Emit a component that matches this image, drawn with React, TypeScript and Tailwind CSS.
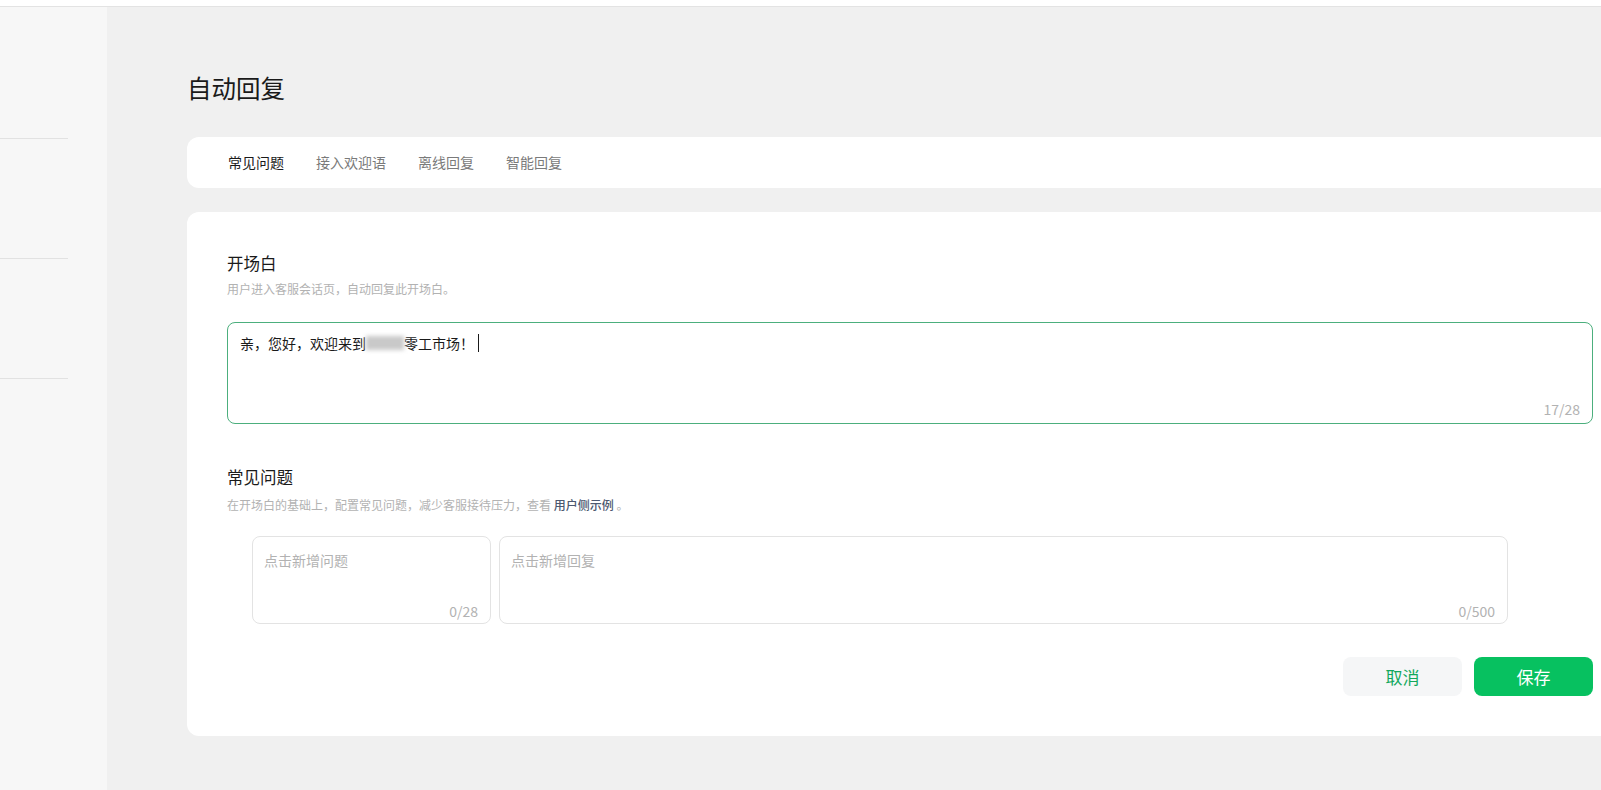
import React from 'react';

const font = { fontFamily: '"Noto Sans CJK SC", "Noto Sans", sans-serif' };

const tabs = ['常见问题', '接入欢迎语', '离线回复', '智能回复'];

const SideNav: React.FC = () => (
  <div className="w-[107px] shrink-0 bg-[#f7f7f7] flex flex-col">
    <div className="h-[132px] flex items-end">
      <div className="w-[68px] border-b border-[#e2e2e2]" />
    </div>
    <div className="h-[120px] flex items-end">
      <div className="w-[68px] border-b border-[#e2e2e2]" />
    </div>
    <div className="h-[120px] flex items-end">
      <div className="w-[68px] border-b border-[#e2e2e2]" />
    </div>
  </div>
);

const Counter: React.FC<{ text: string; bottom?: string }> = ({ text, bottom = 'bottom-[4px]' }) => (
  <span className={`absolute right-[12px] ${bottom} text-[14px] leading-[20px] text-[#b2b2b2]`}>{text}</span>
);

export default function App() {
  return (
    <div className="w-full h-[790px] overflow-hidden flex flex-col bg-[#f0f0f0]" style={font}>
      {/* top strip */}
      <div className="h-[7px] shrink-0 bg-white border-b border-[#e3e3e3]" />

      <div className="flex flex-1 min-h-0">
        <SideNav />

        <main className="flex-1 min-w-0 pl-[80px] pt-[65px]">
          <h1 className="text-[24.5px] leading-[32px] text-[#1a1a1a] font-normal">自动回复</h1>

          {/* tabs */}
          <div className="mt-[33px] mr-[-20px] h-[51px] bg-white rounded-[12px] px-[41px] flex items-center gap-[32px] text-[14px]">
            {tabs.map((t, i) => (
              <span key={t} className={i === 0 ? 'text-[#1a1a1a]' : 'text-[#7a7a7a]'}>
                {t}
              </span>
            ))}
          </div>

          {/* content card */}
          <div className="mt-[24px] mr-[-20px] bg-white rounded-[12px] pl-[40px] pr-[28px] pt-[39px] pb-[40px]">
            <h2 className="text-[16.5px] leading-[24px] text-[#1a1a1a] font-normal">开场白</h2>
            <p className="mt-[6px] text-[12px] leading-[16px] text-[#b2b2b2]">用户进入客服会话页，自动回复此开场白。</p>

            <div className="relative mt-[25px] h-[102px] rounded-[8px] border border-[#4caf7d] px-[12px] pt-[10px]">
              <div className="flex items-center text-[14px] leading-[20px] text-[#1a1a1a]">
                <span>亲，您好，欢迎来到</span>
                <span className="inline-block w-[38px] h-[14px] bg-[#c9c9c9] blur-[2px]" />
                <span>零工市场！</span>
                <span className="inline-block ml-[4px] w-px h-[18px] bg-[#1a1a1a]" />
              </div>
              <Counter text="17/28" />
            </div>

            <h2 className="mt-[41px] text-[16.5px] leading-[24px] text-[#1a1a1a] font-normal">常见问题</h2>
            <p className="mt-[8px] text-[12px] leading-[16px] text-[#b2b2b2]">
              在开场白的基础上，配置常见问题，减少客服接待压力，查看{' '}
              <span className="text-[#4c5870] font-medium">用户侧示例</span> 。
            </p>

            <div className="mt-[23px] ml-[25px] flex gap-[8px]">
              <div className="relative w-[239px] h-[88px] rounded-[8px] border border-[#e3e3e3] px-[11px] pt-[10px]">
                <span className="text-[14px] leading-[20px] text-[#b2b2b2]">点击新增问题</span>
                <Counter text="0/28" bottom="bottom-[2px]" />
              </div>
              <div className="relative w-[1009px] h-[88px] rounded-[8px] border border-[#e3e3e3] px-[11px] pt-[10px]">
                <span className="text-[14px] leading-[20px] text-[#b2b2b2]">点击新增回复</span>
                <Counter text="0/500" bottom="bottom-[2px]" />
              </div>
            </div>

            <div className="mt-[33px] flex justify-end gap-[12px]">
              <button className="w-[119px] h-[39px] rounded-[8px] bg-[#f5f6f7] text-[17px] text-[#12a85c]">取消</button>
              <button className="w-[119px] h-[39px] rounded-[8px] bg-[#07c160] text-[17px] text-white">保存</button>
            </div>
          </div>
        </main>
      </div>
    </div>
  );
}
